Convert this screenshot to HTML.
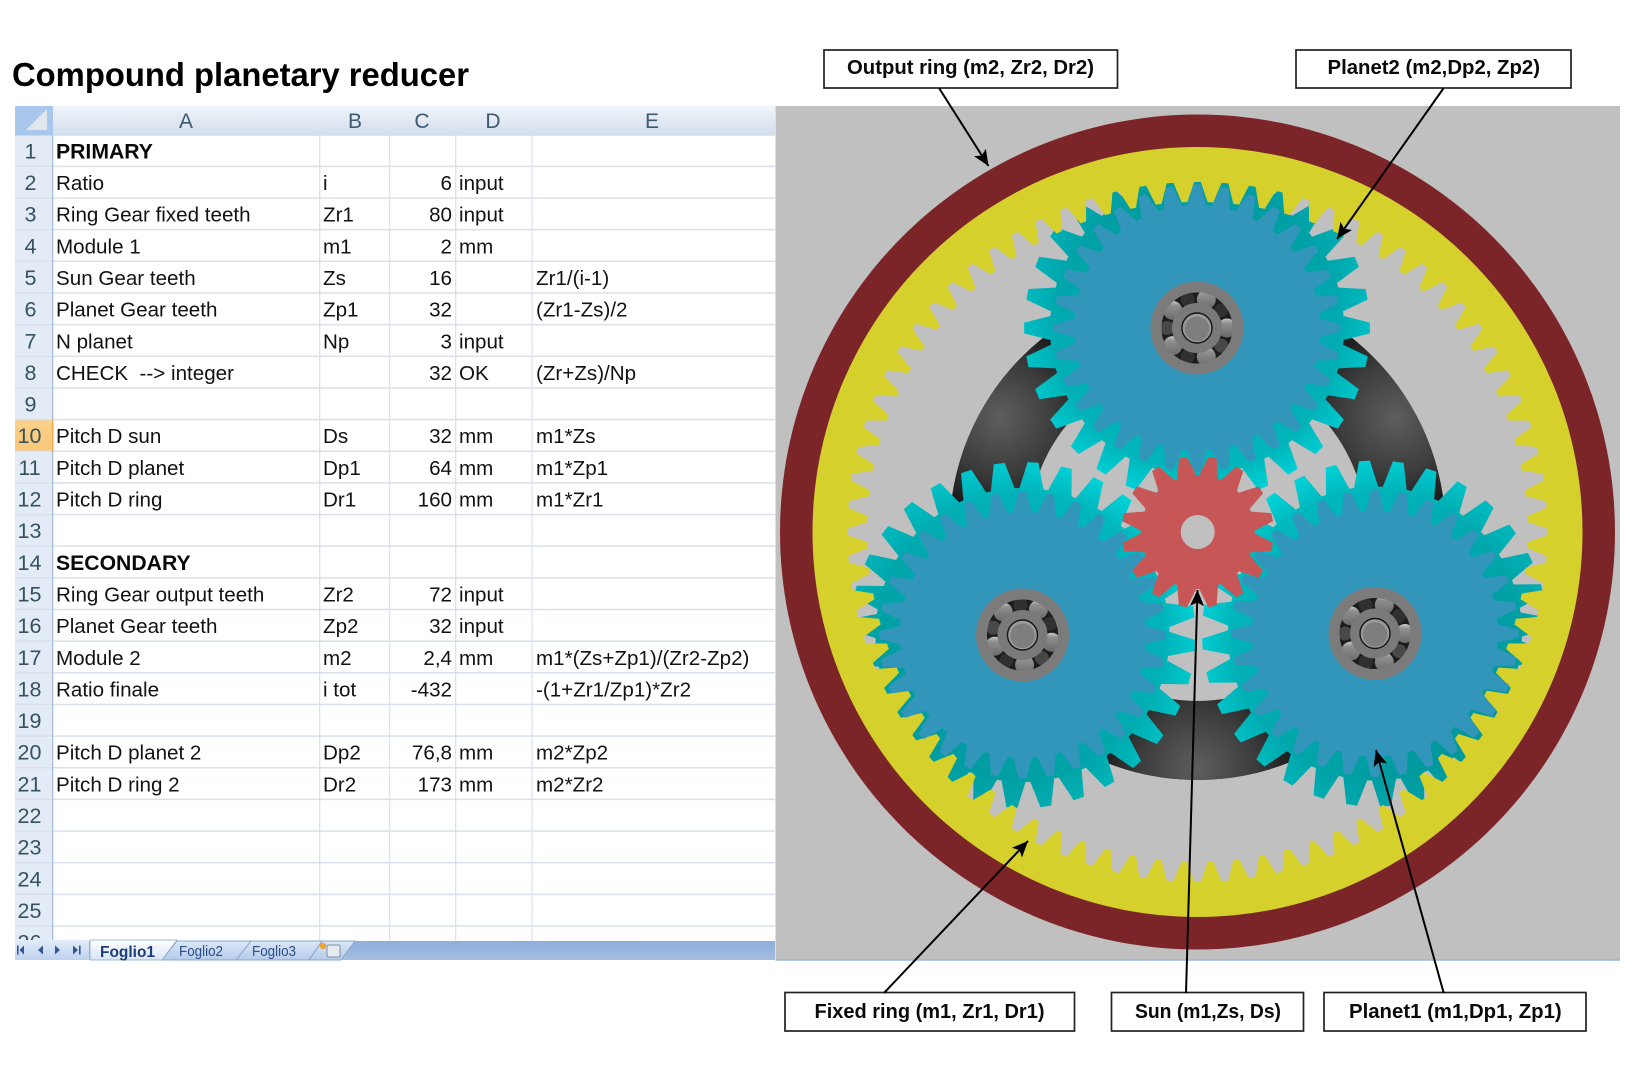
<!DOCTYPE html>
<html lang="en">
<head>
<meta charset="utf-8">
<title>Compound planetary reducer</title>
<style>
html,body{margin:0;padding:0;background:#fff;width:1640px;height:1072px;overflow:hidden}
svg{display:block;position:absolute;left:0;top:0}
text{font-family:"Liberation Sans",sans-serif;white-space:pre}
.c{font-size:20.6px;fill:#121212}
.b{font-size:21.2px;fill:#0a0a0a;font-weight:bold}
.r{text-anchor:end}
.n{font-size:21.5px;fill:#35525f;text-anchor:middle}
.h{font-size:21px;fill:#3f5a70;text-anchor:middle}
.l{font-size:20px;font-weight:bold;fill:#0a0a0a}
.t{font-size:15px;fill:#2c4f86}
</style>
</head>
<body>
<svg width="1640" height="1072" viewBox="0 0 1640 1072" xmlns="http://www.w3.org/2000/svg">
<defs>
<linearGradient id="hd" x1="0" y1="0" x2="0" y2="1"><stop offset="0" stop-color="#f0f4fa"/><stop offset="1" stop-color="#d2deed"/></linearGradient>
<linearGradient id="sel" x1="0" y1="0" x2="0" y2="1"><stop offset="0" stop-color="#fbd28c"/><stop offset="1" stop-color="#fac778"/></linearGradient>
<linearGradient id="bar" x1="0" y1="0" x2="0" y2="1"><stop offset="0" stop-color="#8eaedb"/><stop offset="1" stop-color="#a5bddf"/></linearGradient>
<linearGradient id="nav" x1="0" y1="0" x2="0" y2="1"><stop offset="0" stop-color="#e3edfa"/><stop offset="1" stop-color="#bdd2ee"/></linearGradient>
<linearGradient id="act" x1="0" y1="0" x2="0" y2="1"><stop offset="0" stop-color="#ffffff"/><stop offset="1" stop-color="#d8e5f6"/></linearGradient>
<linearGradient id="tab" x1="0" y1="0" x2="0" y2="1"><stop offset="0" stop-color="#dbe7f7"/><stop offset="1" stop-color="#b4cbea"/></linearGradient>
<linearGradient id="tT" gradientUnits="userSpaceOnUse" x1="1197" y1="170" x2="1197" y2="500"><stop offset="0" stop-color="#00a4a8"/><stop offset=".5" stop-color="#00bfc4"/><stop offset="1" stop-color="#00d2d7"/></linearGradient>
<linearGradient id="tL" gradientUnits="userSpaceOnUse" x1="900" y1="760" x2="1140" y2="510"><stop offset="0" stop-color="#00a2a6"/><stop offset=".5" stop-color="#00bcc0"/><stop offset="1" stop-color="#00d4da"/></linearGradient>
<linearGradient id="tR" gradientUnits="userSpaceOnUse" x1="1497" y1="755" x2="1255" y2="510"><stop offset="0" stop-color="#009ca0"/><stop offset=".5" stop-color="#00bcc0"/><stop offset="1" stop-color="#00d5da"/></linearGradient>
<radialGradient id="tshade" cx=".5" cy=".5" r=".5"><stop offset=".82" stop-color="#007f85" stop-opacity=".3"/><stop offset="1" stop-color="#007f85" stop-opacity="0"/></radialGradient>
<radialGradient id="spot"><stop offset="0" stop-color="#5e5e5e"/><stop offset=".55" stop-color="#3c3c3c"/><stop offset="1" stop-color="#141414"/></radialGradient>
<linearGradient id="ball" x1="0" y1="0" x2="0" y2="1"><stop offset="0" stop-color="#c8c8c8"/><stop offset=".25" stop-color="#8f8f8f"/><stop offset="1" stop-color="#6a6a6a"/></linearGradient>
<clipPath id="car"><circle cx="1197.5" cy="532" r="248"/></clipPath>
<marker id="ah" markerUnits="userSpaceOnUse" markerWidth="18" markerHeight="16" refX="16" refY="8" orient="auto"><path d="M0 1L16 8L0 15L3.5 8Z" fill="#000"/></marker>
</defs>

<!-- Title -->
<text x="12" y="86" font-size="33" font-weight="bold" fill="#000" textLength="457" lengthAdjust="spacingAndGlyphs">Compound planetary reducer</text>

<!-- Sheet -->
<rect x="15" y="106" width="760" height="854" fill="#fff"/>
<g id="grid"></g>
<rect x="15" y="106" width="38" height="29" fill="#a9c6ec"/>
<path d="M26 130L47 109V130Z" fill="#e2e7ee"/>
<rect x="53" y="106" width="722" height="29" fill="url(#hd)"/>
<text class="h" x="186" y="128">A</text><text class="h" x="355" y="128">B</text><text class="h" x="422" y="128">C</text><text class="h" x="493" y="128">D</text><text class="h" x="652" y="128">E</text>

<g transform="translate(0,.4)">
<text class="n" x="30.5" y="158">1</text><text class="b" x="56" y="158">PRIMARY</text>
<text class="n" x="30.5" y="189.6">2</text><text class="c" x="56" y="189.6">Ratio</text><text class="c" x="323" y="189.6">i</text><text class="c r" x="452" y="189.6">6</text><text class="c" x="459" y="189.6">input</text>
<text class="n" x="30.5" y="221.3">3</text><text class="c" x="56" y="221.3">Ring Gear fixed teeth</text><text class="c" x="323" y="221.3">Zr1</text><text class="c r" x="452" y="221.3">80</text><text class="c" x="459" y="221.3">input</text>
<text class="n" x="30.5" y="253">4</text><text class="c" x="56" y="253">Module 1</text><text class="c" x="323" y="253">m1</text><text class="c r" x="452" y="253">2</text><text class="c" x="459" y="253">mm</text>
<text class="n" x="30.5" y="284.6">5</text><text class="c" x="56" y="284.6">Sun Gear teeth</text><text class="c" x="323" y="284.6">Zs</text><text class="c r" x="452" y="284.6">16</text><text class="c" x="536" y="284.6">Zr1/(i-1)</text>
<text class="n" x="30.5" y="316.2">6</text><text class="c" x="56" y="316.2">Planet Gear teeth</text><text class="c" x="323" y="316.2">Zp1</text><text class="c r" x="452" y="316.2">32</text><text class="c" x="536" y="316.2">(Zr1-Zs)/2</text>
<text class="n" x="30.5" y="347.9">7</text><text class="c" x="56" y="347.9">N planet</text><text class="c" x="323" y="347.9">Np</text><text class="c r" x="452" y="347.9">3</text><text class="c" x="459" y="347.9">input</text>
<text class="n" x="30.5" y="379.5">8</text><text class="c" x="56" y="379.5">CHECK  --&gt; integer</text><text class="c r" x="452" y="379.5">32</text><text class="c" x="459" y="379.5">OK</text><text class="c" x="536" y="379.5">(Zr+Zs)/Np</text>
<text class="n" x="30.5" y="411.2">9</text>
<text class="n" x="29.5" y="442.8">10</text><text class="c" x="56" y="442.8">Pitch D sun</text><text class="c" x="323" y="442.8">Ds</text><text class="c r" x="452" y="442.8">32</text><text class="c" x="459" y="442.8">mm</text><text class="c" x="536" y="442.8">m1*Zs</text>
<text class="n" x="29.5" y="474.5">11</text><text class="c" x="56" y="474.5">Pitch D planet</text><text class="c" x="323" y="474.5">Dp1</text><text class="c r" x="452" y="474.5">64</text><text class="c" x="459" y="474.5">mm</text><text class="c" x="536" y="474.5">m1*Zp1</text>
<text class="n" x="29.5" y="506.1">12</text><text class="c" x="56" y="506.1">Pitch D ring</text><text class="c" x="323" y="506.1">Dr1</text><text class="c r" x="452" y="506.1">160</text><text class="c" x="459" y="506.1">mm</text><text class="c" x="536" y="506.1">m1*Zr1</text>
<text class="n" x="29.5" y="537.8">13</text>
<text class="n" x="29.5" y="569.4">14</text><text class="b" x="56" y="569.4">SECONDARY</text>
<text class="n" x="29.5" y="601.1">15</text><text class="c" x="56" y="601.1">Ring Gear output teeth</text><text class="c" x="323" y="601.1">Zr2</text><text class="c r" x="452" y="601.1">72</text><text class="c" x="459" y="601.1">input</text>
<text class="n" x="29.5" y="632.7">16</text><text class="c" x="56" y="632.7">Planet Gear teeth</text><text class="c" x="323" y="632.7">Zp2</text><text class="c r" x="452" y="632.7">32</text><text class="c" x="459" y="632.7">input</text>
<text class="n" x="29.5" y="664.4">17</text><text class="c" x="56" y="664.4">Module 2</text><text class="c" x="323" y="664.4">m2</text><text class="c r" x="452" y="664.4">2,4</text><text class="c" x="459" y="664.4">mm</text><text class="c" x="536" y="664.4">m1*(Zs+Zp1)/(Zr2-Zp2)</text>
<text class="n" x="29.5" y="696">18</text><text class="c" x="56" y="696">Ratio finale</text><text class="c" x="323" y="696">i tot</text><text class="c r" x="452" y="696">-432</text><text class="c" x="536" y="696">-(1+Zr1/Zp1)*Zr2</text>
<text class="n" x="29.5" y="727.7">19</text>
<text class="n" x="29.5" y="759.3">20</text><text class="c" x="56" y="759.3">Pitch D planet 2</text><text class="c" x="323" y="759.3">Dp2</text><text class="c r" x="452" y="759.3">76,8</text><text class="c" x="459" y="759.3">mm</text><text class="c" x="536" y="759.3">m2*Zp2</text>
<text class="n" x="29.5" y="791">21</text><text class="c" x="56" y="791">Pitch D ring 2</text><text class="c" x="323" y="791">Dr2</text><text class="c r" x="452" y="791">173</text><text class="c" x="459" y="791">mm</text><text class="c" x="536" y="791">m2*Zr2</text>
<text class="n" x="29.5" y="822.6">22</text>
<text class="n" x="29.5" y="854.3">23</text>
<text class="n" x="29.5" y="885.9">24</text>
<text class="n" x="29.5" y="917.6">25</text>
<text class="n" x="29.5" y="949.2">26</text>
</g>

<!-- Tabs -->
<rect x="15" y="941" width="760" height="19" fill="url(#bar)"/>
<rect x="15" y="940" width="74" height="20" fill="url(#nav)"/>
<path d="M341 960L355 941H322L309 960Z" fill="url(#tab)" stroke="#8ba6cc"/>
<path d="M309 960L322 941H251L236 960Z" fill="url(#tab)" stroke="#8ba6cc"/>
<path d="M236 960L251 941H177L162 960Z" fill="url(#tab)" stroke="#8ba6cc"/>
<path d="M90 960V940H177L162 960Z" fill="url(#act)" stroke="#8ba6cc" stroke-width=".7"/>
<text x="100" y="957" font-size="15.5" font-weight="bold" fill="#1d3e78" textLength="55" lengthAdjust="spacingAndGlyphs">Foglio1</text>
<text class="t" x="179" y="956" textLength="44" lengthAdjust="spacingAndGlyphs">Foglio2</text>
<text class="t" x="252" y="956" textLength="44" lengthAdjust="spacingAndGlyphs">Foglio3</text>
<rect x="327" y="945" width="13" height="12" rx="1.5" fill="#e6ebf2" stroke="#7d8fa6"/>
<circle cx="323" cy="946" r="3.2" fill="#eba52c"/>
<path d="M17 945.5h1.6v9H17zM24 945.5v9l-4.5-4.5zM43 945.5v9l-5-4.5zM55 945.5v9l5-4.5zM73 945.5v9l5-4.5zM79 945.5h1.6v9H79z" fill="#32588f"/>

<!-- 3D view -->
<rect x="775.5" y="106" width="844.5" height="854" fill="#c0c0c0"/>
<rect x="775.5" y="959.5" width="844.5" height="1.2" fill="#8eb0dc"/>
<circle cx="1197.5" cy="532" r="417.5" fill="#7c2528"/>
<circle cx="1197.5" cy="532" r="380" fill="#c0c0c0"/>
<circle cx="1197.5" cy="532" r="248" fill="#141414"/>
<g clip-path="url(#car)">
<circle cx="1395" cy="418" r="100" fill="url(#spot)"/>
<circle cx="1000" cy="418" r="100" fill="url(#spot)"/>
<circle cx="1197.5" cy="768" r="105" fill="url(#spot)"/>
</g>
<circle cx="1197.5" cy="532" r="169" fill="#c0c0c0"/>
<g id="teal"></g>
<path id="yellow" fill="#d5d02b" fill-rule="evenodd"/>
<g id="blue"></g>
<g id="bear"></g>
<path id="sun" fill="#c75656"/>
<circle cx="1197.7" cy="532" r="17" fill="#c0c0c0"/>

<!-- Callouts -->
<g fill="#fff" stroke="#222" stroke-width="1.7">
<rect x="824" y="50" width="293.5" height="38"/>
<rect x="1296" y="50" width="275" height="38"/>
<rect x="785" y="992.5" width="289.5" height="38.5"/>
<rect x="1111.5" y="992.5" width="192" height="38.5"/>
<rect x="1324" y="992.5" width="262" height="38.5"/>
</g>
<text class="l" x="847" y="74" textLength="247" lengthAdjust="spacingAndGlyphs">Output ring (m2, Zr2, Dr2)</text>
<text class="l" x="1327.5" y="74" textLength="212.5" lengthAdjust="spacingAndGlyphs">Planet2 (m2,Dp2, Zp2)</text>
<text class="l" x="814.5" y="1018" textLength="230" lengthAdjust="spacingAndGlyphs">Fixed ring (m1, Zr1, Dr1)</text>
<text class="l" x="1135" y="1018" textLength="146" lengthAdjust="spacingAndGlyphs">Sun (m1,Zs, Ds)</text>
<text class="l" x="1349" y="1018" textLength="212.7" lengthAdjust="spacingAndGlyphs">Planet1 (m1,Dp1, Zp1)</text>
<g stroke="#000" stroke-width="2" fill="none">
<line x1="939" y1="88" x2="988.5" y2="166" marker-end="url(#ah)"/>
<line x1="1443.7" y1="88" x2="1337" y2="239" marker-end="url(#ah)"/>
<line x1="884" y1="993" x2="1028" y2="841" marker-end="url(#ah)"/>
<line x1="1186" y1="993" x2="1197.5" y2="590" marker-end="url(#ah)"/>
<line x1="1443.7" y1="993" x2="1376" y2="750" marker-end="url(#ah)"/>
</g>
</svg>
<script>
(function(){
var D=Math.PI/180;
function P(cx,cy,r,a){return (cx+r*Math.sin(a*D)).toFixed(2)+' '+(cy-r*Math.cos(a*D)).toFixed(2);}
function gear(cx,cy,n,rt,rr,th,rh,ph){var s='';for(var i=0;i<n;i++){var a=ph+i*360/n;
 s+=(i?'L':'M')+P(cx,cy,rr,a-rh)+'L'+P(cx,cy,rt,a-th)+'L'+P(cx,cy,rt,a+th)+'L'+P(cx,cy,rr,a+rh);}
 return s+'Z';}
function el(n,attrs){var e=document.createElementNS('http://www.w3.org/2000/svg',n);for(var k in attrs)e.setAttribute(k,attrs[k]);return e;}
var pl=[{x:1197,y:328,t:'tT',p:0,b:18},{x:1022.5,y:635,t:'tL',p:3.5,b:32},{x:1375,y:633.5,t:'tR',p:-3.5,b:18}];
var teal=document.getElementById('teal'),blue=document.getElementById('blue'),bear=document.getElementById('bear');
pl.forEach(function(g){
 var td=gear(g.x,g.y,32,173,147,1.8,4.7,g.p);
 teal.appendChild(el('path',{d:td,fill:'url(#'+g.t+')'}));
 teal.appendChild(el('path',{d:td,fill:'url(#tshade)'}));
 blue.appendChild(el('path',{d:gear(g.x,g.y,32,143.5,123,1.5,4.3,0),fill:'#3196ba'}));
 bear.appendChild(el('circle',{cx:g.x,cy:g.y,r:40,fill:'#1c1c1c'}));
 for(var j=0;j<5;j++){var a=(g.b+36+72*j)*D;
  bear.appendChild(el('circle',{cx:g.x+30*Math.sin(a),cy:g.y-30*Math.cos(a),r:7,fill:j%2?'#484848':'#303030'}));}
 for(j=0;j<5;j++){a=(g.b+72*j)*D;var bx=g.x+30*Math.sin(a),by=g.y-30*Math.cos(a);
  bear.appendChild(el('circle',{cx:bx,cy:by,r:9.5,fill:'url(#ball)'}));}
 bear.appendChild(el('circle',{cx:g.x,cy:g.y,r:41,fill:'none',stroke:'#7b7b7b','stroke-width':11}));
 bear.appendChild(el('circle',{cx:g.x,cy:g.y,r:25,fill:'#7a7a7a'}));
 bear.appendChild(el('circle',{cx:g.x,cy:g.y,r:15,fill:'#9a9a9a',stroke:'#151515','stroke-width':1.4}));
 bear.appendChild(el('circle',{cx:g.x,cy:g.y+.8,r:12.2,fill:'#7e7e7e'}));
});
var cx=1197.5,cy=532;
var ring='M'+(cx-385)+' '+cy+'A385 385 0 1 0 '+(cx+385)+' '+cy+'A385 385 0 1 0 '+(cx-385)+' '+cy+'Z';
/* yellow teeth point inward: hole polygon alternates root gap and tooth tip */
var s='';for(var i=0;i<80;i++){var a=2.25+i*4.5;
 s+=(i?'L':'M')+P(cx,cy,350,a-1.7)+'L'+P(cx,cy,330,a-0.5)+'L'+P(cx,cy,330,a+0.5)+'L'+P(cx,cy,350,a+1.7);}
document.getElementById('yellow').setAttribute('d',ring+s+'Z');
document.getElementById('sun').setAttribute('d',gear(1197.7,532,16,76,57,3.1,9.7,11.25));
/* grid */
var g=document.getElementById('grid'),top0=135,h=31.65,vx=[319,389,455,531.5];
for(i=0;i<26;i++){var y=top0+h*i;
 g.appendChild(el('rect',{x:15,y:y,width:37.5,height:h,fill:i==9?'url(#sel)':'#e3ebf6'}));}
for(i=0;i<4;i++)g.appendChild(el('rect',{x:vx[i],y:135,width:1.3,height:806,fill:'#dde3ee'}));
for(i=1;i<27;i++){y=top0+h*i-1;
 g.appendChild(el('rect',{x:15,y:y,width:760,height:1.5,fill:'#d9e0ec'}));}
g.appendChild(el('rect',{x:52,y:135,width:1.3,height:806,fill:'#a9bdd8'}));
g.appendChild(el('rect',{x:15,y:134,width:760,height:1.4,fill:'#a9bdd8'}));
g.appendChild(el('rect',{x:52,y:420,width:1.3,height:32,fill:'#f0a64a'}));
[53,319,389,455,531.5,774].forEach(function(x){g.appendChild(el('rect',{x:x-.5,y:106,width:1.2,height:29,fill:'#a9bdd8'}));});
})();
</script>
</body>
</html>
